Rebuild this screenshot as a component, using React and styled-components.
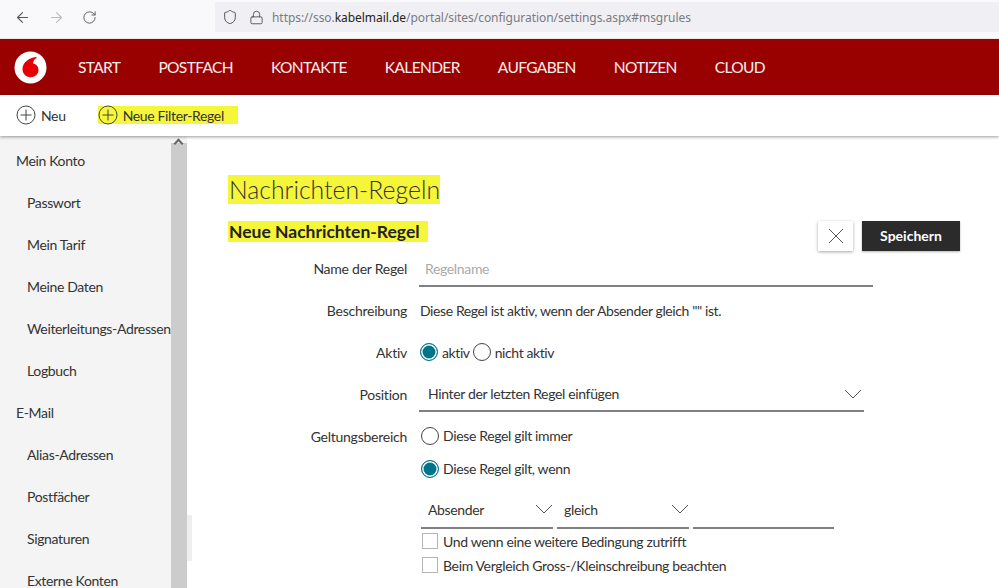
import React from 'react';
import styled, { createGlobalStyle } from 'styled-components';
import { ArrowLeft, ArrowRight, RotateCw, Shield, Lock } from 'lucide-react';

const NAV_ITEMS = ['START', 'POSTFACH', 'KONTAKTE', 'KALENDER', 'AUFGABEN', 'NOTIZEN', 'CLOUD'];

const SIDE_ITEMS = [
  { label: 'Mein Konto', top: true },
  { label: 'Passwort' },
  { label: 'Mein Tarif' },
  { label: 'Meine Daten' },
  { label: 'Weiterleitungs-Adressen' },
  { label: 'Logbuch' },
  { label: 'E-Mail', top: true },
  { label: 'Alias-Adressen' },
  { label: 'Postfächer' },
  { label: 'Signaturen' },
  { label: 'Externe Konten' },
];

function PlusCircle() {
  return (
    <svg width="20" height="20" viewBox="0 0 20 20" fill="none" stroke="#444" strokeWidth="1">
      <circle cx="10" cy="10" r="9" />
      <path d="M10 4.5v11M4.5 10h11" />
    </svg>
  );
}

function Logo() {
  return (
    <svg width="33" height="33" viewBox="0 0 33 33">
      <circle cx="16.5" cy="16.5" r="16" fill="#fff" />
      <path
        d="M21.5 6c-5.500.8-13 5-13 12 0 4.500 3.200 8.200 8 8.200 4.500 0 8-3 8-7.200 0-3.500-2.300-6-5.500-6.500.2-2.600 1.500-4.600 3.900-5.500-.3-.5-.8-1-1.400-1z"
        fill="#e60000"
      />
    </svg>
  );
}

function Chevron() {
  return (
    <svg width="18" height="10" viewBox="0 0 18 10" fill="none" stroke="#555" strokeWidth="1">
      <path d="M1 1l8 8 8-8" />
    </svg>
  );
}

function Radio({ checked, children }) {
  return (
    <RadioLabel>
      <RadioCircle checked={checked} />
      {children}
    </RadioLabel>
  );
}

function Select({ width, children }) {
  return (
    <SelectBox width={width}>
      <span>{children}</span>
      <Chevron />
    </SelectBox>
  );
}

function App() {
  return (
    <Page>
      <GlobalStyle />

      <BrowserBar>
        <BrowserButtons>
          <ArrowLeft size={17} strokeWidth={1.5} color="#555" />
          <ArrowRight size={17} strokeWidth={1.5} color="#bbb" />
          <RotateCw size={15} strokeWidth={1.5} color="#555" />
        </BrowserButtons>
        <UrlBar>
          <Shield size={16} strokeWidth={1.5} color="#555" />
          <Lock size={15} strokeWidth={1.5} color="#555" />
          <Url>
            https://sso.<b>kabelmail.de</b>/portal/sites/configuration/settings.aspx#msgrules
          </Url>
        </UrlBar>
      </BrowserBar>

      <NavBar>
        <Logo />
        <NavList>
          {NAV_ITEMS.map((item) => (
            <NavItem key={item}>{item}</NavItem>
          ))}
        </NavList>
      </NavBar>

      <ToolBar>
        <ToolButton>
          <PlusCircle />
          Neu
        </ToolButton>
        <ToolButton marked>
          <PlusCircle />
          Neue Filter-Regel
        </ToolButton>
      </ToolBar>

      <Body>
        <Sidebar>
          <SideList>
            {SIDE_ITEMS.map((item) => (
              <SideItem key={item.label} top={item.top}>
                {item.label}
              </SideItem>
            ))}
          </SideList>
          <ScrollTrack>
            <ScrollArrow />
          </ScrollTrack>
        </Sidebar>
        <PageThumb />

        <Main>
          <Title>
            <Marker>Nachrichten-Regeln</Marker>
          </Title>
          <HeadRow>
            <SubTitle>
              <Marker tail>Neue Nachrichten-Regel</Marker>
            </SubTitle>
            <Actions>
              <CloseButton>
                <svg width="16" height="16" viewBox="0 0 16 16" fill="none" stroke="#555" strokeWidth="1">
                  <path d="M1 1l14 14M15 1L1 15" />
                </svg>
              </CloseButton>
              <SaveButton>Speichern</SaveButton>
            </Actions>
          </HeadRow>

          <Form>
            <Label>Name der Regel</Label>
            <NameInput>Regelname</NameInput>

            <Label>Beschreibung</Label>
            <Value>Diese Regel ist aktiv, wenn der Absender gleich "" ist.</Value>

            <Label>Aktiv</Label>
            <Value>
              <Radio checked>aktiv</Radio>
              <Radio>nicht aktiv</Radio>
            </Value>

            <Label>Position</Label>
            <PositionSelect>
              <span>Hinter der letzten Regel einfügen</span>
              <Chevron />
            </PositionSelect>

            <Label>Geltungsbereich</Label>
            <Scope>
              <ScopeRadio>
                <Radio>Diese Regel gilt immer</Radio>
              </ScopeRadio>
              <ScopeRadio>
                <Radio checked>Diese Regel gilt, wenn</Radio>
              </ScopeRadio>
              <Conditions>
                <Select width={132}>Absender</Select>
                <Select width={132}>gleich</Select>
                <EmptyField />
              </Conditions>
              <CheckRow>
                <CheckBox />
                Und wenn eine weitere Bedingung zutrifft
              </CheckRow>
              <CheckRow>
                <CheckBox />
                Beim Vergleich Gross-/Kleinschreibung beachten
              </CheckRow>
            </Scope>
          </Form>
        </Main>
      </Body>
    </Page>
  );
}

const GlobalStyle = createGlobalStyle`
  html, body {
    margin: 0;
    padding: 0;
    background: #ffffff;
  }

  * {
    box-sizing: border-box;
  }
`;

const Page = styled.div`
  width: 999px;
  height: 588px;
  display: flex;
  flex-direction: column;
  overflow: hidden;
  font-family: 'Lato', sans-serif;
  font-size: 14px;
  letter-spacing: -0.35px;
  color: #333333;
`;

const BrowserBar = styled.div`
  height: 39px;
  flex-shrink: 0;
  display: flex;
  align-items: center;
  padding: 0 0 4px 14px;
  background: #f9f9fb;
  border-bottom: 1px solid #f4e4e4;
`;

const BrowserButtons = styled.div`
  width: 201px;
  display: flex;
  align-items: center;
  gap: 17px;
`;

const UrlBar = styled.div`
  flex: 1;
  height: 30px;
  display: flex;
  align-items: center;
  gap: 11px;
  padding-left: 7px;
  background: #f0f0f4;
`;

const Url = styled.span`
  margin-left: -3px;
  font-family: 'Noto Sans', sans-serif;
  font-size: 12px;
  letter-spacing: -0.05px;
  color: #7a7a82;

  b {
    font-weight: 400;
    color: #222222;
  }
`;

const NavBar = styled.div`
  height: 56px;
  flex-shrink: 0;
  display: flex;
  align-items: center;
  padding-left: 14px;
  background: #990000;
`;

const NavList = styled.div`
  display: flex;
  gap: 38px;
  margin-left: 31px;
`;

const NavItem = styled.span`
  font-size: 15.500px;
  letter-spacing: -0.62px;
  color: #fbeeee;
`;

const ToolBar = styled.div`
  height: 41px;
  flex-shrink: 0;
  position: relative;
  z-index: 1;
  display: flex;
  align-items: center;
  gap: 32px;
  padding: 0 0 1px 16px;
  background: #ffffff;
  box-shadow: 0 1px 3px rgba(0, 0, 0, 0.4);
`;

const ToolButton = styled.div`
  display: flex;
  align-items: center;
  gap: 5px;
  height: 18px;
  padding-right: ${(props) => (props.marked ? '14px' : '0')};
  background: ${(props) => (props.marked ? '#f5f53a' : 'transparent')};
  white-space: nowrap;
`;

const Body = styled.div`
  flex: 1;
  position: relative;
  display: flex;
  min-height: 0;
`;

const Sidebar = styled.div`
  width: 187px;
  flex-shrink: 0;
  display: flex;
  overflow: hidden;
  background: #f4f4f4;
`;

const SideList = styled.div`
  width: 171px;
  padding-top: 3px;
`;

const SideItem = styled.div`
  height: 42px;
  display: flex;
  align-items: center;
  padding-left: ${(props) => (props.top ? '16px' : '27px')};
  white-space: nowrap;
`;

const ScrollTrack = styled.div`
  width: 16px;
  margin-top: 7px;
  background: #cccccc;
  position: relative;
`;

const ScrollArrow = styled.div`
  position: absolute;
  top: -3px;
  left: 4px;
  width: 7px;
  height: 7px;
  border-left: 2px solid #666666;
  border-top: 2px solid #666666;
  transform: rotate(45deg);
`;

const PageThumb = styled.div`
  position: absolute;
  left: 187px;
  top: 379px;
  width: 5px;
  height: 46px;
  background: #eeeeee;
`;

const Main = styled.div`
  flex: 1;
  padding: 40px 39px 0 41px;
`;

const Title = styled.h1`
  margin: 0;
  height: 29px;
  font-size: 24.800px;
  font-weight: 300;
  line-height: 28px;
  letter-spacing: 0;
  color: #333333;
`;

const Marker = styled.span`
  background: #f5f53a;
  padding: 0 ${(props) => (props.tail ? '8px' : '0')} 0 1px;
`;

const HeadRow = styled.div`
  height: 27px;
  margin-top: 15px;
  display: flex;
  justify-content: space-between;
  align-items: flex-start;
`;

const SubTitle = styled.h2`
  margin: 2px 0 0;
  font-size: 17.500px;
  font-weight: 700;
  line-height: 20px;
  letter-spacing: 0;
  color: #222222;
`;

const Actions = styled.div`
  display: flex;
  gap: 9px;
  margin-top: 1px;
`;

const CloseButton = styled.div`
  width: 35px;
  height: 30px;
  display: flex;
  align-items: center;
  justify-content: center;
  background: #ffffff;
  box-shadow: 0 1px 3px rgba(0, 0, 0, 0.35);
`;

const SaveButton = styled.div`
  width: 98px;
  height: 30px;
  display: flex;
  align-items: center;
  justify-content: center;
  padding-bottom: 1px;
  background: #2b2b2b;
  color: #ffffff;
  font-weight: 700;
  letter-spacing: 0;
  box-shadow: 0 1px 2px rgba(0, 0, 0, 0.3);
`;

const Form = styled.div`
  display: grid;
  grid-template-columns: 179px 1fr;
  grid-auto-rows: 42px;
  column-gap: 12px;
`;

const Label = styled.div`
  height: 42px;
  display: flex;
  align-items: center;
  justify-content: flex-end;
  letter-spacing: -0.25px;
`;

const Value = styled.div`
  display: flex;
  align-items: center;
  gap: 3px;
  padding-left: 1px;
  letter-spacing: -0.4px;
`;

const NameInput = styled.div`
  width: 454px;
  height: 40px;
  display: flex;
  align-items: center;
  padding: 5px 0 0 6px;
  border-bottom: 2px solid #808080;
  color: #aaaaaa;
`;

const PositionSelect = styled.div`
  width: 445px;
  height: 39px;
  display: flex;
  align-items: center;
  justify-content: space-between;
  padding: 4px 2px 0 9px;
  border-bottom: 2px solid #808080;
`;

const Scope = styled.div`
  padding: 4px 0 0 2px;
`;

const ScopeRadio = styled.div`
  height: 33px;
  display: flex;
  align-items: center;
`;

const RadioLabel = styled.label`
  display: flex;
  align-items: center;
  gap: 4px;
`;

const RadioCircle = styled.span`
  width: 18px;
  height: 18px;
  border-radius: 50%;
  border: 1px solid ${(props) => (props.checked ? '#00748a' : '#444444')};
  background: ${(props) => (props.checked ? '#00748a' : '#ffffff')};
  box-shadow: ${(props) => (props.checked ? 'inset 0 0 0 1.500px #ffffff' : 'none')};
`;

const Conditions = styled.div`
  display: flex;
  gap: 3px;
  height: 39px;
  margin-top: 5px;
`;

const SelectBox = styled.div`
  width: ${(props) => props.width}px;
  height: 39px;
  display: flex;
  align-items: center;
  justify-content: space-between;
  padding: 1px 0 0 7px;
  margin-right: 1px;
  border-bottom: 2px solid #808080;
`;

const EmptyField = styled.div`
  width: 141px;
  height: 39px;
  border-bottom: 2px solid #808080;
`;

const CheckRow = styled.div`
  height: 24px;
  display: flex;
  align-items: center;
  gap: 5px;
`;

const CheckBox = styled.span`
  width: 16px;
  height: 16px;
  margin-left: 1px;
  border: 1px solid #b5b5b5;
  background: #ffffff;
`;

export default App;
